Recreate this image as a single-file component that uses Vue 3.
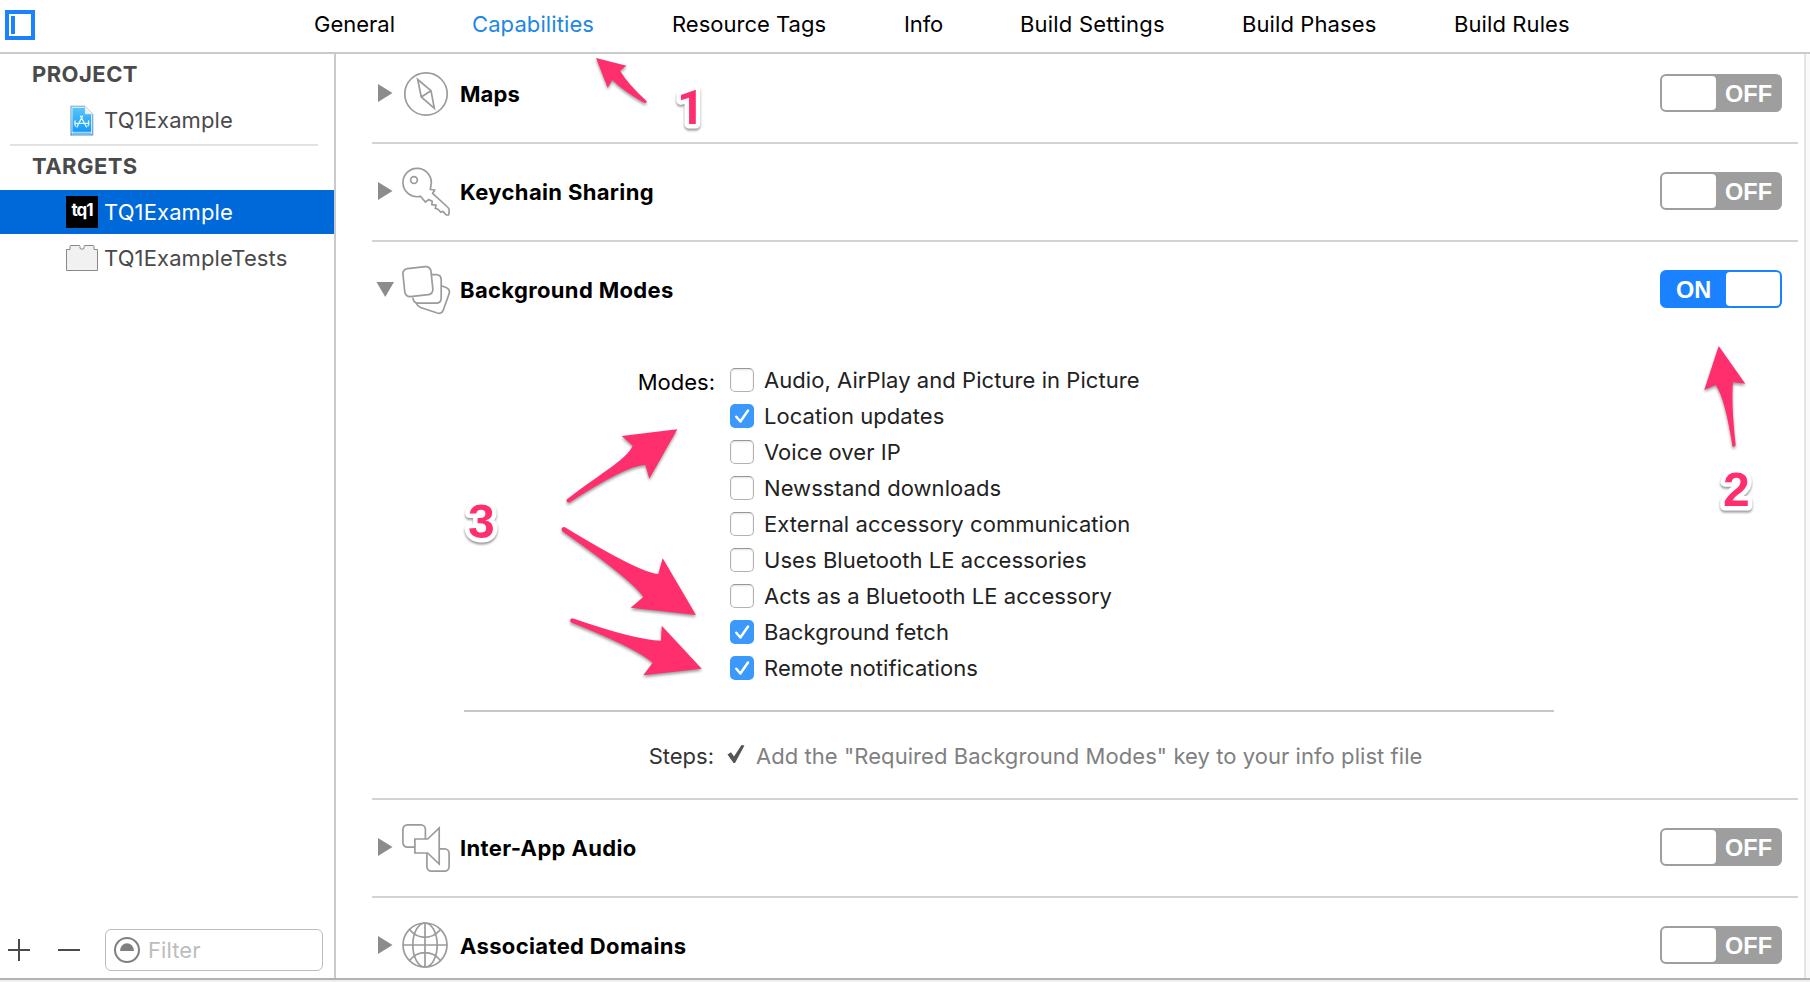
<script setup>
const tabs = [
  { name: 'General', cls: 'general' },
  { name: 'Capabilities', cls: 'capabilities' },
  { name: 'Resource Tags', cls: 'resource' },
  { name: 'Info', cls: 'info' },
  { name: 'Build Settings', cls: 'settings' },
  { name: 'Build Phases', cls: 'phases' },
  { name: 'Build Rules', cls: 'rules' },
]

const modes = [
  { label: 'Audio, AirPlay and Picture in Picture', on: false },
  { label: 'Location updates', on: true },
  { label: 'Voice over IP', on: false },
  { label: 'Newsstand downloads', on: false },
  { label: 'External accessory communication', on: false },
  { label: 'Uses Bluetooth LE accessories', on: false },
  { label: 'Acts as a Bluetooth LE accessory', on: false },
  { label: 'Background fetch', on: true },
  { label: 'Remote notifications', on: true },
]

const sections = [
  { id: 'maps', title: 'Maps', on: false },
  { id: 'keychain', title: 'Keychain Sharing', on: false },
  { id: 'background', title: 'Background Modes', on: true },
  { id: 'audio', title: 'Inter-App Audio', on: false },
  { id: 'domains', title: 'Associated Domains', on: false },
]
</script>

<template>
  <div class="window">
    <header class="tabbar">
      <span class="pane-toggle"><i></i></span>
      <nav class="tabs">
        <a v-for="t in tabs" :key="t.name" :class="['tab', t.cls]">{{ t.name }}</a>
      </nav>
    </header>

    <div class="body">
      <aside class="sidebar">
        <div class="heading">PROJECT</div>
        <div class="item project">
          <svg class="item-icon" width="32" height="36" viewBox="0 0 32 36">
            <defs>
              <linearGradient id="doc" x1="0" y1="0" x2="0" y2="1">
                <stop offset="0" stop-color="#5cc8f8" />
                <stop offset="1" stop-color="#0d93f5" />
              </linearGradient>
            </defs>
            <path d="M4.500 3h14.500l8 8v21.500h-22.500z" fill="url(#doc)" stroke="#b9c3ca" stroke-width="1" />
            <path d="M6 31V4.500h12.500l7 7V31z" fill="none" stroke="#d8f1ff" stroke-width="0.9" />
            <path d="M19 3v8h8z" fill="#eef3f6" stroke="#c9d2d8" stroke-width="0.6" />
            <path d="M6 29.300h20" stroke="#d8f1ff" stroke-width="0.9" />
            <path d="M16.500 13l-5.500 11M14.500 13l6 11M9 20.300h14M9 18q-.5 3 .5 5M22.500 18q.8 3-.5 5" fill="none" stroke="#e6f6ff" stroke-width="1.300" stroke-linecap="round" />
          </svg>
          <span>TQ1Example</span>
        </div>
        <div class="heading targets">TARGETS</div>
        <div class="item selected">
          <span class="app-icon">tq1</span>
          <span>TQ1Example</span>
        </div>
        <div class="item tests">
          <svg class="item-icon" width="32" height="28" viewBox="0 0 32 28">
            <path d="M.5 26.500v-21h3.500V2.500q0-1 1-1h8q1 0 1 1v2q2 1.500 4 0v-2q0-1 1-1h8q1 0 1 1v3h3.500v21z" fill="#f1f1f1" stroke="#888" stroke-width="1" />
          </svg>
          <span>TQ1ExampleTests</span>
        </div>
        <footer class="tools">
          <svg width="22" height="22" viewBox="0 0 22 22"><path d="M0 11h22M11 0v22" stroke="#4a4a4a" stroke-width="2" /></svg>
          <svg width="22" height="22" viewBox="0 0 22 22"><path d="M0 11h22" stroke="#4a4a4a" stroke-width="2" /></svg>
          <div class="filter">
            <svg width="26" height="26" viewBox="0 0 26 26">
              <circle cx="13" cy="13" r="12" fill="none" stroke="#808080" stroke-width="2" />
              <path d="M6 14a7 7.800 0 0 1 14 0z" fill="#808080" />
            </svg>
            <span>Filter</span>
          </div>
        </footer>
      </aside>

      <main class="detail">
        <section v-for="s in sections" :key="s.id" class="capability">
          <div class="row">
            <svg class="disclosure" width="20" height="20" viewBox="0 0 20 20">
              <path v-if="s.on" d="M.5 2H18L9.250 17z" fill="#8c8c8c" />
              <path v-else d="M2 1v18l14.500-9z" fill="#8c8c8c" />
            </svg>
            <svg class="cap-icon" width="48" height="48" viewBox="0 0 48 48">
              <g fill="none" stroke="#9b9b9b" stroke-width="1.700">
                <template v-if="s.id === 'maps'">
                  <circle cx="24" cy="24" r="21.200" />
                  <path d="M15.700 9.500L29 20.700l3.300 17.600L19.300 27zM19.300 27L29 20.700" />
                </template>
                <template v-else-if="s.id === 'keychain'">
                  <path d="M18.500 28.300A14.200 14.200 0 1 1 28.800 18.300L28.300 21.500 32.800 22 30.600 25.300 46 39.500Q47.600 41 47.200 43.500L46.700 47H44.200L41 43.400 38.800 44.300 36 41.200 33.300 40.400 34 37.200 29.800 36.600 30.200 33.200 26.600 31.600 23.300 34z" stroke-linejoin="round" />
                  <circle cx="12" cy="12" r="3.400" />
                </template>
                <template v-else-if="s.id === 'background'">
                  <rect x="1.800" y="1.500" width="28.200" height="28.200" rx="5" transform="rotate(-6 16 15.700)" />
                  <path d="M29.500 8.700H34q5.200 0 5.200 5.200V32q0 5.200-5.200 5.200H16q-4.500 0-5.200-5.500" />
                  <path d="M39.500 19.800l4.500 1.700q4.600 2 3.100 6.300L41.300 44q-1.500 4.200-6 3L18.500 41.500Q15.500 40.300 14 37" />
                </template>
                <template v-else-if="s.id === 'audio'">
                  <rect x=".9" y=".9" width="22.500" height="22.200" rx="4.500" />
                  <rect x="24.900" y="24.900" width="22.200" height="22.200" rx="4.500" />
                  <path d="M12.900 15H25.700L37.200 3.900V40L25.700 29H12.900z" fill="#fff" />
                </template>
                <template v-else>
                  <circle cx="23" cy="23" r="22" />
                  <ellipse cx="23" cy="23" rx="12.200" ry="22" />
                  <path d="M23 1v44M1 23h44M7.500 7.500Q14 15.300 23 15.300T38.500 7.500M7.500 38.500Q14 30.700 23 30.700T38.500 38.500" />
                </template>
              </g>
            </svg>
            <h2 :class="['title', s.id]">{{ s.title }}</h2>
            <span :class="['switch', { on: s.on }]">
              <i class="knob"></i><b>{{ s.on ? 'ON' : 'OFF' }}</b>
            </span>
          </div>

          <div v-if="s.on" class="expanded">
            <div class="modes">
              <span class="label">Modes:</span>
              <ul>
                <li v-for="m in modes" :key="m.label">
                  <span :class="['check', { checked: m.on }]">
                    <svg v-if="m.on" width="24" height="24" viewBox="0 0 24 24">
                      <path d="M6.300 12.800l4.100 4.700L18 6.500" fill="none" stroke="#fff" stroke-width="2.500" stroke-linecap="round" stroke-linejoin="round" />
                    </svg>
                  </span>
                  <span class="mode-name">{{ m.label }}</span>
                </li>
              </ul>
            </div>
            <div class="steps">
              <span class="label">Steps:</span>
              <svg class="tick" width="18" height="20" viewBox="0 0 18 20">
                <path d="M.5 10.500L4 8.300 7 12.500 14.500 1 17.500 1.500 8 19H6.500z" fill="#555" />
              </svg>
              <span class="step-text">Add the "Required Background Modes" key to your info plist file</span>
            </div>
          </div>
        </section>
      </main>
      <div class="gutter"></div>
    </div>
    <div class="bottom"></div>

    <svg class="notes" width="1810" height="982" viewBox="0 0 1810 982">
      <g class="arrows">
        <path d="M596 58L626.500 65.700 620 70.700Q628 84 646 100.500Q647.500 102.500 645.500 103L643.500 102.500Q622 90 612.300 80L607.700 87.700z" />
        <path d="M1718.700 346L1745.300 383.700 1733 382.300Q1731 402 1735.600 445Q1735 447.500 1732.500 446.500Q1725 398 1715.700 385L1704.300 390z" />
        <path d="M677.300 429.300L649.300 478.700 645.300 464.700Q625 466 569.500 502.500Q566 503 566.700 499.500C605 470 626 460 632.700 445.700L621.700 436z" />
        <path d="M696 615L630.700 607.700 643.300 597Q632 580 562 531Q560.500 527 564.500 527Q640 573 658.300 574L662.700 558.300z" />
        <path d="M701.700 668.700L643.300 675.300 652.700 662.700Q636 648 570.700 622.200Q569 619 572.500 618.300Q635 640 661 640.700L661.700 625.700z" />
      </g>
      <g class="digits">
        <text class="one" x="677" y="124">1</text>
        <text x="1723" y="506">2</text>
        <text x="468" y="538">3</text>
      </g>
    </svg>
  </div>
</template>

<style>
html, body { margin: 0; overflow: hidden; }
</style>

<style scoped>
.window {
  position: relative;
  width: 1810px;
  height: 982px;
  display: flex;
  flex-direction: column;
  overflow: hidden;
  background: #fff;
  color: #000;
  font: 22px/44px Inter, "Liberation Sans", sans-serif;
  white-space: nowrap;
}
.tabbar {
  display: flex;
  box-sizing: border-box;
  height: 54px;
  border-bottom: 2px solid #cacaca;
}
.pane-toggle {
  box-sizing: border-box;
  width: 30px;
  height: 30px;
  margin: 10px 0 0 5px;
  padding: 2px;
  border: 4px solid #1a82ff;
}
.pane-toggle i { display: block; width: 4px; height: 18px; background: #1a82ff; }
.tabs { display: flex; margin-left: 279px; line-height: 48px; }
.tab { letter-spacing: 0.1px; }
.general { width: 158px; letter-spacing: 0; }
.capabilities { width: 200px; color: #1e87e5; }
.resource { width: 232px; letter-spacing: 0; }
.info { width: 116px; letter-spacing: -0.1px; }
.settings { width: 222px; letter-spacing: 0.2px; }
.phases { width: 212px; }

.body { display: flex; height: 924px; }
.sidebar {
  display: flex;
  flex-direction: column;
  box-sizing: border-box;
  width: 336px;
  border-right: 2px solid #cacaca;
  color: #4a4a4a;
}
.heading {
  height: 44px;
  padding-left: 32px;
  line-height: 40px;
  font-weight: 700;
  letter-spacing: 0.45px;
}
.item {
  display: flex;
  align-items: center;
  height: 44px;
  padding-left: 66px;
  gap: 6px;
  letter-spacing: 0.12px;
}
.item-icon, .app-icon { flex: none; }
.project {
  height: 46px;
  margin: 0 16px 0 10px;
  padding-left: 56px;
  border-bottom: 2px solid #e2e2e2;
  line-height: 44px;
}
.project span { padding-bottom: 2px; }
.selected { background: #0069d9; color: #fff; }
.app-icon {
  width: 32px;
  height: 32px;
  background: #000;
  color: #fff;
  text-align: center;
  font-size: 17px;
  font-weight: 700;
  line-height: 29px;
  letter-spacing: -1px;
}
.tests { margin-top: 2px; }
.tools {
  display: flex;
  align-items: center;
  margin: auto 0 7px 8px;
}
.tools > svg { margin-right: 28px; }
.filter {
  display: flex;
  align-items: center;
  box-sizing: border-box;
  width: 218px;
  height: 42px;
  margin-left: -3px;
  padding-left: 8px;
  border: 1px solid #bdbdbd;
  border-radius: 6px;
  color: #bdbdbd;
  letter-spacing: 0.1px;
}
.filter svg { margin-right: 8px; }

.detail { width: 1426px; height: 924px; margin-left: 36px; overflow: hidden; }
.capability { height: 96px; border-bottom: 2px solid #d3d3d3; }
.capability:first-child { margin-top: -8px; }
.capability:nth-child(3) { height: 556px; }
.row { display: flex; height: 96px; padding: 0 16px 0 4px; }
.disclosure { margin-top: 37px; }
.capability:nth-child(3) .disclosure { margin-top: 38px; }
.cap-icon { margin: 24px 10px 0 6px; overflow: visible; }
.title { margin: 26px 0 0; font-size: 22px; font-weight: 700; letter-spacing: 0.35px; }
.title.maps { letter-spacing: 0.1px; }
.switch {
  display: flex;
  box-sizing: border-box;
  width: 122px;
  height: 38px;
  margin: 28px 0 0 auto;
  padding: 2px;
  border-radius: 6px;
  background: #9e9e9e;
  color: #fff;
  font: 700 23.500px/36px "Liberation Sans", Arial, sans-serif;
}
.knob { width: 54px; height: 34px; border-radius: 4px; background: #fff; }
.switch b { flex: 1; padding-left: 9px; }
.switch.on { flex-direction: row-reverse; background: #1a82ff; }
.switch.on b { padding-left: 14px; }

.label { width: 342px; text-align: right; }
.modes {
  display: flex;
  width: 1090px;
  height: 372px;
  margin-left: 92px;
  border-bottom: 2px solid #c8c8c8;
}
.modes .label { width: 251px; margin-top: 22px; }
ul { margin: 24px 0 0 15px; padding: 0; list-style: none; }
li { display: flex; align-items: center; height: 36px; color: #222; letter-spacing: 0.06px; }
.check {
  box-sizing: border-box;
  width: 24px;
  height: 24px;
  margin-right: 10px;
  border: 1px solid #b2b2b2;
  border-top-color: #999;
  border-radius: 5px;
  box-shadow: inset 0 1px 2px rgba(0, 0, 0, 0.12);
}
.check.checked { border: 0; background: #3b99fc; box-shadow: none; }
.check svg { display: block; }
.steps { display: flex; align-items: center; margin-top: 22px; color: #333; }
.tick { margin: -4px 11px 0 13px; }
.step-text { color: #808080; letter-spacing: 0.06px; }

.gutter { box-sizing: border-box; width: 6px; margin-left: 6px; border-left: 2px solid #e4e4e4; background: #fafafa; }
.bottom { height: 2px; border-top: 2px solid #b2b2b2; background: #efefef; }

.notes { position: absolute; inset: 0; pointer-events: none; }
.arrows { fill: #ff2f6e; filter: drop-shadow(0 2px 1.500px rgba(0, 0, 0, 0.4)); }
.digits {
  font: 700 48px "Liberation Sans", Arial, sans-serif;
  fill: #ff2f6e;
  stroke: #fff;
  stroke-width: 9px;
  stroke-linejoin: round;
  paint-order: stroke;
  filter: drop-shadow(0 2px 1px rgba(0, 0, 0, 0.4));
}
.one { font-family: Roboto, "Liberation Sans", sans-serif; }
</style>
